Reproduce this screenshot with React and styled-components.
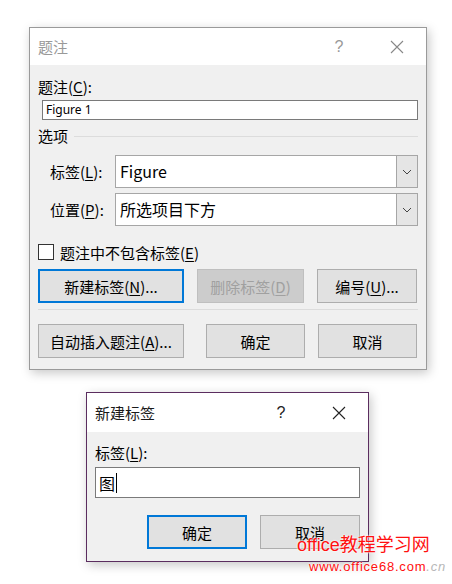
import React from "react"
import styled, { createGlobalStyle } from "styled-components"

const GlobalStyle = createGlobalStyle`
  * { box-sizing: border-box; }
  body {
    margin: 0;
    background: #fff;
    font-family: "Noto Sans CJK SC", "Noto Sans", sans-serif;
    color: #000;
  }
`

const Page = styled.div`
  position: relative;
  width: 452px;
  height: 584px;
  padding: 27px 0 0 29px;
  overflow: hidden;
`

const Dialog = styled.div`
  width: ${p => p.w}px;
  margin-left: ${p => p.ml || 0}px;
  margin-top: ${p => p.mt || 0}px;
  border: 1px solid ${p => p.border};
  background: #f0f0f0;
  box-shadow: 2px 3px 10px rgba(0, 0, 0, 0.22);
`

const TitleBar = styled.div`
  height: ${p => p.h}px;
  background: #fff;
  display: flex;
  align-items: center;
  padding-left: 8px;
  font-size: 15px;
  color: ${p => (p.dim ? "#999" : "#1a1a1a")};
`

const TitleText = styled.div`
  flex: 1;
`

const TitleButton = styled.div`
  width: ${p => p.w}px;
  display: flex;
  justify-content: center;
  align-items: center;
  font-family: "Liberation Sans", sans-serif;
  font-size: 16px;
  color: ${p => (p.dim ? "#999" : "#222")};
`

const Body = styled.div`
  padding: ${p => p.pad};
  display: flex;
  flex-direction: column;
`

const Label = styled.div`
  height: 20px;
  line-height: 20px;
  font-size: 15px;
  margin-top: ${p => p.mt || 0}px;
  white-space: nowrap;
`

const Key = styled.span`
  text-decoration: underline;
  text-underline-offset: 2px;
`

const SmallInput = styled.div`
  margin: 3px 0 0 4px;
  height: 20px;
  border: 1px solid #7a7a7a;
  background: #fff;
  font-family: "Noto Sans", sans-serif;
  font-size: 12px;
  line-height: 18px;
  padding-left: 3px;
`

const GroupHead = styled.div`
  display: flex;
  align-items: center;
  gap: 6px;
  margin-top: 5px;
  height: 20px;
  font-size: 15px;
  &::after {
    content: "";
    flex: 1;
    height: 1px;
    margin-top: 2px;
    background: #dcdcdc;
  }
`

const FieldRow = styled.div`
  display: flex;
  align-items: center;
  margin-top: ${p => p.mt}px;
  padding-left: 12px;
  height: 33px;
`

const FieldLabel = styled.div`
  width: 65px;
  font-size: 15px;
`

const Select = styled.div`
  flex: 1;
  height: 33px;
  display: flex;
  border: 1px solid #a6a6a6;
  background: #fff;
`

const SelectText = styled.div`
  flex: 1;
  padding-left: 4px;
  font-size: 16px;
  line-height: 31px;
`

const SelectArrow = styled.div`
  width: 21px;
  border-left: 1px solid #a6a6a6;
  background: #e5e5e5;
  display: flex;
  align-items: center;
  justify-content: center;
`

const CheckRow = styled.label`
  display: flex;
  align-items: center;
  gap: 6px;
  margin-top: 18px;
  height: 16px;
  font-size: 15px;
`

const CheckBox = styled.span`
  width: 16px;
  height: 16px;
  border: 1px solid #333;
  background: #fff;
`

const ButtonRow = styled.div`
  display: flex;
  justify-content: ${p => (p.end ? "flex-end" : "flex-start")};
  gap: 13px;
  margin-top: ${p => p.mt}px;
`

const Button = styled.div`
  width: ${p => p.w}px;
  height: 34px;
  margin-left: ${p => p.ml || 0}px;
  display: flex;
  align-items: center;
  justify-content: center;
  font-size: 15px;
  background: ${p => (p.disabled ? "#cccccc" : "#e1e1e1")};
  color: ${p => (p.disabled ? "#a0a0a0" : "#000")};
  border: ${p => (p.primary ? "2px solid #0078d7" : `1px solid ${p.disabled ? "#bfbfbf" : "#adadad"}`)};
`

const Separator = styled.div`
  height: 1px;
  background: #dcdcdc;
  margin-top: 6px;
`

const TextBox = styled.div`
  margin-top: 4px;
  height: 31px;
  border: 1px solid #7a7a7a;
  background: #fff;
  display: flex;
  align-items: center;
  padding-left: 3px;
  font-size: 16px;
`

const Caret = styled.span`
  width: 1px;
  height: 20px;
  margin-left: 1px;
  background: #000;
`

const Watermark = styled.div`
  position: absolute;
  left: 297px;
  top: 534px;
  color: #ff1010;
  font-family: "Liberation Sans", "Noto Sans CJK SC", sans-serif;
  text-shadow: 0 0 2px #fff, 0 0 2px #fff;
`

const WaterBig = styled.div`
  font-size: 18px;
  line-height: 22px;
  white-space: nowrap;
`

const WaterSmall = styled.div`
  margin: 3px 0 0 12px;
  font-size: 13px;
  letter-spacing: 0.8px;
  white-space: nowrap;
  span {
    color: #b8b8b8;
    font-style: italic;
  }
`

const Close = ({ color }) => (
  <svg width="14" height="14" viewBox="0 0 14 14">
    <path d="M1 1L13 13M13 1L1 13" stroke={color} strokeWidth="1.1" />
  </svg>
)

const Chevron = () => (
  <svg width="10" height="6" viewBox="0 0 10 6">
    <path d="M1 1L5 5L9 1" stroke="#444" strokeWidth="1" fill="none" />
  </svg>
)

const App = () => (
  <>
    <GlobalStyle />
    <Page>
      <Dialog w={398} border="#9a9a9a">
        <TitleBar h={37} dim>
          <TitleText>题注</TitleText>
          <TitleButton w={58} dim>?</TitleButton>
          <TitleButton w={58}><Close color="#888" /></TitleButton>
        </TitleBar>
        <Body pad="0 8px 11px 8px">
          <Label mt={12}>题注(<Key>C</Key>):</Label>
          <SmallInput>Figure 1</SmallInput>
          <GroupHead>选项</GroupHead>
          <FieldRow mt={10}>
            <FieldLabel>标签(<Key>L</Key>):</FieldLabel>
            <Select>
              <SelectText>Figure</SelectText>
              <SelectArrow><Chevron /></SelectArrow>
            </Select>
          </FieldRow>
          <FieldRow mt={5}>
            <FieldLabel>位置(<Key>P</Key>):</FieldLabel>
            <Select>
              <SelectText>所选项目下方</SelectText>
              <SelectArrow><Chevron /></SelectArrow>
            </Select>
          </FieldRow>
          <CheckRow>
            <CheckBox />
            <span>题注中不包含标签(<Key>E</Key>)</span>
          </CheckRow>
          <ButtonRow mt={9}>
            <Button w={146} primary>新建标签(<Key>N</Key>)...</Button>
            <Button w={107} disabled>删除标签(<Key>D</Key>)</Button>
            <Button w={100}>编号(<Key>U</Key>)...</Button>
          </ButtonRow>
          <Separator />
          <ButtonRow mt={14}>
            <Button w={146}>自动插入题注(<Key>A</Key>)...</Button>
            <Button w={99} ml={9}>确定</Button>
            <Button w={99}>取消</Button>
          </ButtonRow>
        </Body>
      </Dialog>

      <Dialog w={283} ml={57} mt={22} border="#5b2d5f">
        <TitleBar h={39}>
          <TitleText>新建标签</TitleText>
          <TitleButton w={58}>?</TitleButton>
          <TitleButton w={58}><Close color="#222" /></TitleButton>
        </TitleBar>
        <Body pad="0 8px 12px 8px">
          <Label mt={11}>标签(<Key>L</Key>):</Label>
          <TextBox>图<Caret /></TextBox>
          <ButtonRow mt={17} end>
            <Button w={100} primary>确定</Button>
            <Button w={100}>取消</Button>
          </ButtonRow>
        </Body>
      </Dialog>

      <Watermark>
        <WaterBig>office教程学习网</WaterBig>
        <WaterSmall>www.office68.com<span>.cn</span></WaterSmall>
      </Watermark>
    </Page>
  </>
)

export default App
